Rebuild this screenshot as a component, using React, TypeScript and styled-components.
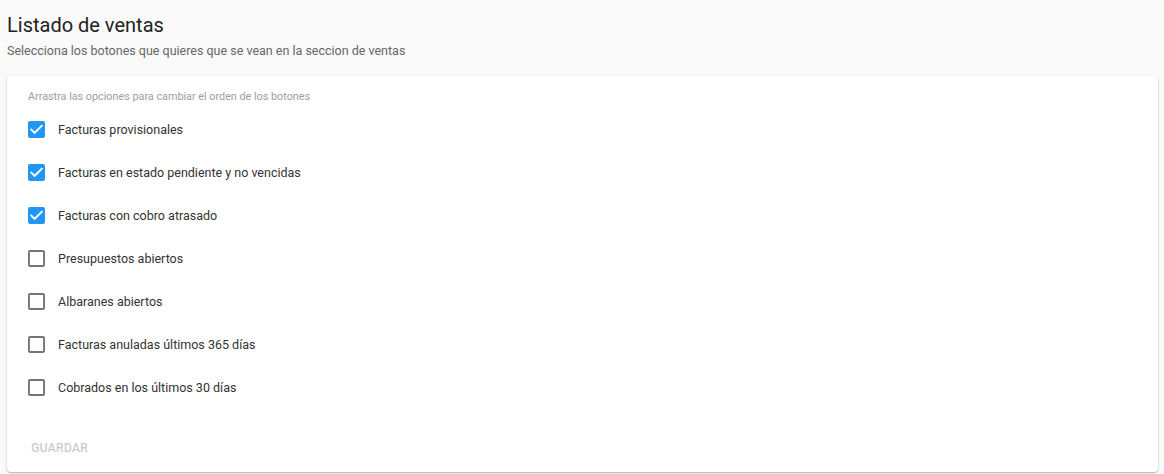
import styled, { createGlobalStyle } from "styled-components";

const options = [
  { label: "Facturas provisionales", checked: true },
  { label: "Facturas en estado pendiente y no vencidas", checked: true },
  { label: "Facturas con cobro atrasado", checked: true },
  { label: "Presupuestos abiertos", checked: false },
  { label: "Albaranes abiertos", checked: false },
  { label: "Facturas anuladas últimos 365 días", checked: false },
  { label: "Cobrados en los últimos 30 días", checked: false },
];

const CHECKED =
  "M19 3H5c-1.11 0-2 .9-2 2v14c0 1.1.89 2 2 2h14c1.11 0 2-.9 2-2V5c0-1.1-.89-2-2-2zm-9 14l-5-5 1.41-1.41L10 14.17l7.59-7.59L19 8l-9 9z";
const UNCHECKED =
  "M19 5v14H5V5h14m0-2H5c-1.1 0-2 .9-2 2v14c0 1.1.9 2 2 2h14c1.1 0 2-.9 2-2V5c0-1.1-.9-2-2-2z";

export default function App() {
  return (
    <>
      <GlobalStyle />
      <Page>
        <Title>Listado de ventas</Title>
        <Subtitle>Selecciona los botones que quieres que se vean en la seccion de ventas</Subtitle>
        <Card>
          <Hint>Arrastra las opciones para cambiar el orden de los botones</Hint>
          <List>
            {options.map((o) => (
              <Row key={o.label}>
                <Box $checked={o.checked} viewBox="3 3 18 18">
                  {o.checked && <rect x="5" y="5" width="14" height="14" fill="#fff" />}
                  <path d={o.checked ? CHECKED : UNCHECKED} />
                </Box>
                <Label>{o.label}</Label>
              </Row>
            ))}
          </List>
          <SaveButton disabled>Guardar</SaveButton>
        </Card>
      </Page>
    </>
  );
}

const GlobalStyle = createGlobalStyle`
  html, body {
    margin: 0;
    background: #fafafa;
    font-family: Roboto, "Liberation Sans", sans-serif;
  }
`;

const Page = styled.div`
  display: flex;
  flex-direction: column;
  padding: 13px 6px 0 7px;
  height: 474px;
  box-sizing: border-box;
`;

const Title = styled.h1`
  margin: 0;
  font-size: 20px;
  font-weight: 400;
  line-height: 24px;
  color: #222;
`;

const Subtitle = styled.p`
  margin: 7px 0 0;
  font-size: 12.5px;
  line-height: 14px;
  color: #666;
`;

const Card = styled.div`
  margin-top: 18px;
  background: #fff;
  border-radius: 4px;
  box-shadow: 0 1px 3px rgba(0, 0, 0, 0.2), 0 1px 1px rgba(0, 0, 0, 0.12);
  padding: 15px 21px 11px 21px;
  display: flex;
  flex-direction: column;
  align-items: flex-start;
`;

const Hint = styled.div`
  font-size: 10.8px;
  line-height: 12px;
  color: #9e9e9e;
`;

const List = styled.div`
  display: flex;
  flex-direction: column;
  margin-top: 16px;
`;

const Row = styled.label`
  display: flex;
  align-items: center;
  height: 43px;
  &:first-child {
    margin-top: -11px;
  }
`;

const Box = styled.svg<{ $checked: boolean }>`
  width: 17px;
  height: 17px;
  flex-shrink: 0;
  fill: ${(p) => (p.$checked ? "#2196f3" : "#757575")};
`;

const Label = styled.span`
  margin-left: 13px;
  font-size: 12.5px;
  color: #333;
`;

const SaveButton = styled.button`
  margin-top: 25px;
  margin-left: -5px;
  border: none;
  background: none;
  padding: 6px 8px;
  font-family: Roboto, "Liberation Sans", sans-serif;
  font-size: 12.5px;
  font-weight: 500;
  text-transform: uppercase;
  color: rgba(0, 0, 0, 0.22);
`;
